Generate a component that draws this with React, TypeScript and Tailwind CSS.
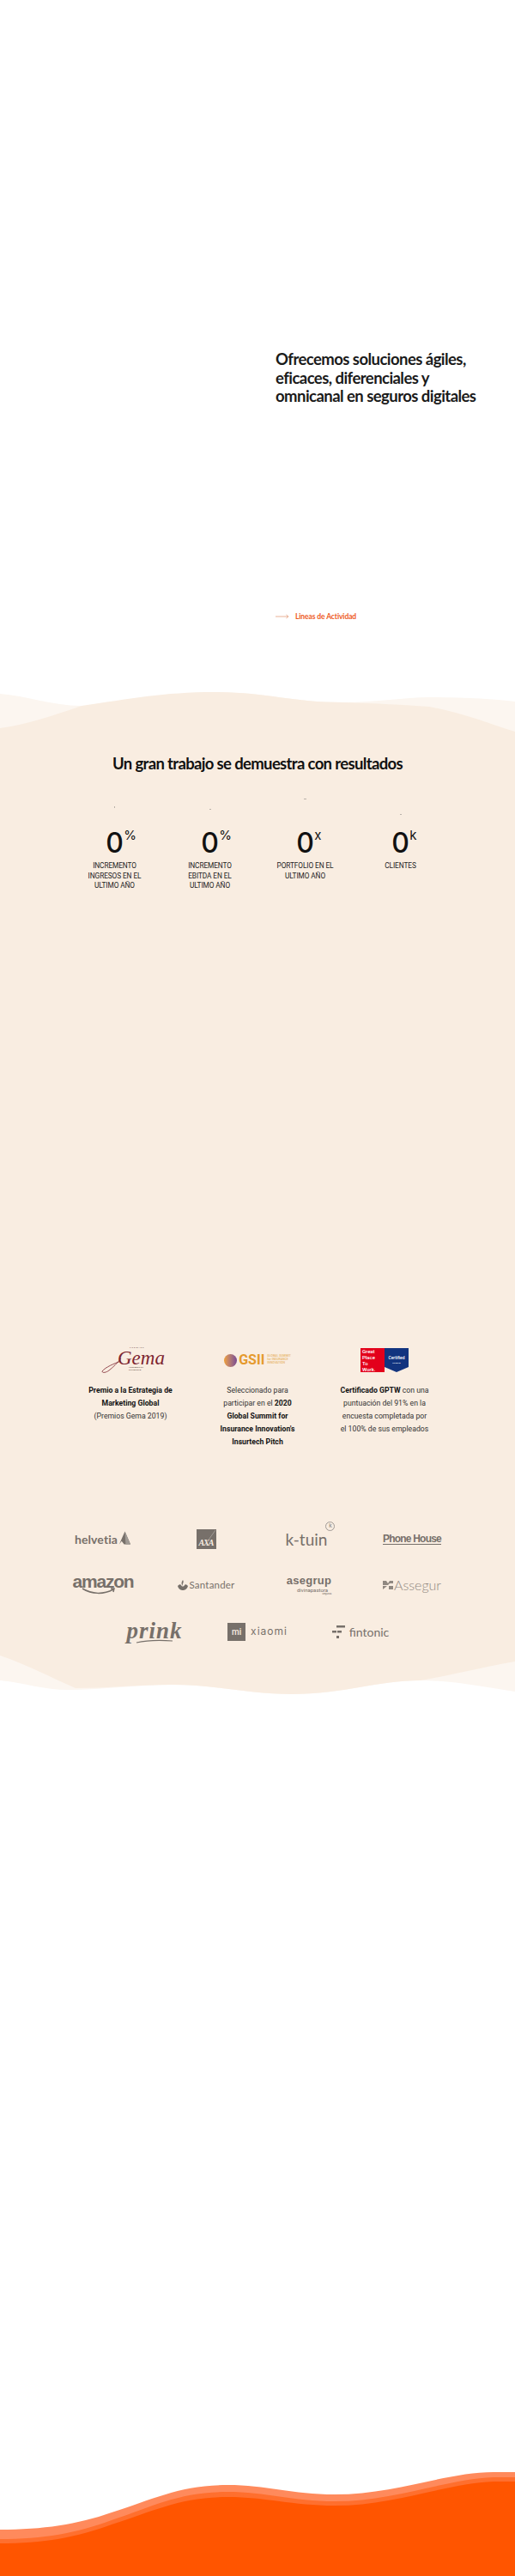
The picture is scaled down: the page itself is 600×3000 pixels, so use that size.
const stats = [
  { sup: "%", label: ["INCREMENTO", "INGRESOS EN EL", "ULTIMO AÑO"], mark: "mt-[21px] w-[1px] h-[2px]" },
  { sup: "%", label: ["INCREMENTO", "EBITDA EN EL", "ULTIMO AÑO"], mark: "mt-[24px] w-[2px] h-[1px]" },
  { sup: "x", label: ["PORTFOLIO EN EL", "ULTIMO AÑO"], mark: "mt-[12px] w-[3px] h-[1px]" },
  { sup: "k", label: ["CLIENTES"], mark: "mt-[30px] w-[2px] h-[1px]" },
]

function Stat({ sup, label, mark }: { sup: string; label: string[]; mark: string }) {
  return (
    <div className="w-[111px] flex flex-col items-center">
      <div className="h-[40px] flex justify-center">
        <div className={`${mark} bg-[#b9b2aa]`}></div>
      </div>
      <div className="mt-[6px] relative font-['Inter',sans-serif] font-medium text-[32px] leading-[36px] text-[#111]">
        0
        <span className="absolute left-[21px] top-[-1px] text-[15px] leading-[20px] font-normal">{sup}</span>
      </div>
      <div className="mt-[3px] text-[8.3px] leading-[11.7px] text-center text-[#222] tracking-[-0.1px]">
        {label.map((l) => (
          <div key={l}>{l}</div>
        ))}
      </div>
    </div>
  )
}

function GemaLogo() {
  return (
    <div className="relative w-[70px] h-[32px]">
      <div className="absolute top-[0px] left-[34px] text-[2.5px] tracking-[1px] text-[#6b4a4a]">PREMIOS</div>
      <svg viewBox="0 0 70 32" className="absolute inset-0 w-[70px] h-[32px]" fill="none" stroke="#7d2530" strokeWidth="0.8">
        <path d="M24 17C16 20 6 24 2 29c0 2 4 2 8-1 5-4 10-9 14-14" />
      </svg>
      <div className="absolute left-[20px] top-[1px] text-[23px] leading-[26px] italic text-[#7d2530] font-['Liberation_Serif',serif]">Gema</div>
      <div className="absolute left-[33px] top-[23px] text-[2.5px] leading-[3px] text-[#6b5a50]">LIDERAZGO EN<br />ESTRATEGIA</div>
    </div>
  )
}

function GsiiLogo() {
  return (
    <div className="flex items-center gap-[2px]">
      <div className="w-[15px] h-[15px] rounded-full bg-gradient-to-r from-[#f0a030] to-[#7a4a90]"></div>
      <div className="text-[16px] leading-[16px] font-bold text-[#e59a2e]">GSII</div>
      <div className="ml-[1px] text-[3.5px] leading-[3.8px] text-[#e8b56a] font-medium">
        GLOBAL SUMMIT<br />for INSURANCE<br />INNOVATION
      </div>
    </div>
  )
}

function GptwLogo() {
  return (
    <div className="flex">
      <div className="w-[28px] h-[28px] bg-[#e3001b] text-white text-[6px] leading-[6.8px] font-medium pl-[2px] pt-[1px]">
        Great<br />Place<br />To<br />Work.
      </div>
      <div className="relative w-[28px] h-[28px]">
        <svg viewBox="0 0 28 28" className="absolute inset-0 w-[28px] h-[28px]">
          <path d="M0 0H28V22L14 28 0 22Z" fill="#12347f" />
        </svg>
        <div className="relative text-center text-white text-[5px] font-medium leading-[6px] pt-[8px]">Certified</div>
        <div className="relative text-center text-white text-[2.5px] leading-[3px] pt-[2px]">ESPAÑA</div>
      </div>
    </div>
  )
}

function Helvetia() {
  return (
    <div className="flex items-center gap-[1px]">
      <span className="font-['Lato',sans-serif] font-bold text-[14px] tracking-[0.1px]">helvetia</span>
      <svg viewBox="0 0 16 16" className="w-[15px] h-[16px] -mt-[3px]">
        <path d="M8 0 15 16H7L4 12 1 16Z" fill="#77706a" />
        <path d="M8 0 15 16H9Z" fill="#a09a94" />
      </svg>
    </div>
  )
}

function Axa() {
  return (
    <div className="relative w-[23px] h-[23px] bg-[#77706a] text-[#f9ede1] flex items-end justify-center overflow-hidden">
      <svg viewBox="0 0 23 23" className="absolute inset-0 w-[23px] h-[23px]">
        <path d="M22 1 12 15" stroke="#a09a94" strokeWidth="1" />
      </svg>
      <span className="text-[10px] leading-[14px] font-bold italic font-['Liberation_Serif',serif] tracking-[-1px]">AXA</span>
    </div>
  )
}

function Ktuin() {
  return (
    <div className="relative pr-[6px] pt-[4px]">
      <span className="font-['Lato',sans-serif] text-[19px] leading-[22px]">k-tuin</span>
      <span className="absolute right-[-3px] top-[-6px] w-[11px] h-[11px] rounded-full border border-[#a09a94] text-[7px] leading-[9px] text-center text-[#8c857e]">k</span>
    </div>
  )
}

function PhoneHouse() {
  return (
    <div className="font-['Liberation_Sans',sans-serif] font-bold text-[12px] leading-[12px] tracking-[-0.8px] border-b-[1.5px] border-[#77706a]">Phone House</div>
  )
}

function Amazon() {
  return (
    <div className="relative h-[26px] -mt-[2px]">
      <span className="font-['Liberation_Sans',sans-serif] font-bold text-[21px] leading-[20px] tracking-[-1.2px]">amazon</span>
      <svg viewBox="0 0 70 10" className="absolute left-0 top-[16px] w-[70px] h-[10px]" fill="none" stroke="#77706a" strokeWidth="1.5">
        <path d="M11 2C22 9 36 9 47 3M44 2 48 2 47 6" />
      </svg>
    </div>
  )
}

function Santander() {
  return (
    <div className="flex items-center gap-[2px]">
      <svg viewBox="0 0 12 12" className="w-[12px] h-[12px]">
        <path d="M6 0C8 3 5 4 6 7 4 5 4 3 6 0ZM0 7C2 5 3 5 4 6 5 8 7 8 8 6 9 5 10 5 12 7 11 11 8 12 6 12 4 12 1 11 0 7Z" fill="#77706a" />
      </svg>
      <span className="font-['Lato',sans-serif] text-[11.5px] leading-[14px] tracking-[0.2px]">Santander</span>
    </div>
  )
}

function Asegrup() {
  return (
    <div className="flex flex-col items-center">
      <span className="font-['Liberation_Sans',sans-serif] font-bold text-[13px] leading-[12px] tracking-[0.3px]">asegrup</span>
      <span className="text-[6px] leading-[7px] mt-[1px] pl-[8px]">divinapastora</span>
      <span className="text-[3px] leading-[3px] self-end">seguros</span>
    </div>
  )
}

function Assegur() {
  return (
    <div className="flex items-center gap-[1px] opacity-80">
      <svg viewBox="0 0 12 12" className="w-[12px] h-[12px]">
        <path d="M0 1H4L6 4 8 1H12V4H8L6 6H0ZM0 7H5L0 11ZM7 7H12V11H7Z" fill="#77706a" />
      </svg>
      <span className="font-['Lato',sans-serif] font-light text-[16px] leading-[16px]">Assegur</span>
    </div>
  )
}

function Prink() {
  return (
    <div className="relative pb-[3px]">
      <span className="font-['Liberation_Serif',serif] italic font-bold text-[27px] leading-[22px] block tracking-[1px]">prink</span>
      <svg viewBox="0 0 68 6" className="absolute left-0 bottom-[-2px] w-[68px] h-[6px]" fill="none" stroke="#77706a" strokeWidth="1.2">
        <path d="M12 4C25 1 40 1 54 2" />
      </svg>
    </div>
  )
}

function Xiaomi() {
  return (
    <div className="flex items-center gap-[6px]">
      <div className="w-[21px] h-[21px] bg-[#77706a] text-[#f9ede1] text-[10px] leading-[21px] text-center font-medium">mi</div>
      <span className="font-['Inter',sans-serif] text-[12px] leading-[12px] tracking-[1px]">xiaomi</span>
    </div>
  )
}

function Fintonic() {
  return (
    <div className="flex items-center gap-[5px]">
      <svg viewBox="0 0 15 15" className="w-[15px] h-[15px]">
        <path d="M5 0h10v2.5H5ZM0 6h5v2.5H0ZM6 6h5v2.5H6ZM5 12h3v3H5Z" fill="#77706a" />
      </svg>
      <span className="font-['Lato',sans-serif] text-[14px] leading-[16px] mt-[2px]">fintonic</span>
    </div>
  )
}

const logoRows = [
  [<Helvetia key="h" />, <Axa key="a" />, <Ktuin key="k" />, <PhoneHouse key="p" />],
  [<Amazon key="am" />, <Santander key="s" />, <Asegrup key="as" />, <Assegur key="ag" />],
  [<Prink key="pr" />, <Xiaomi key="x" />, <Fintonic key="f" />],
]

export default function App() {
  return (
    <div className="w-[600px] h-[3000px] overflow-hidden bg-white font-['Roboto',sans-serif] flex flex-col">
      {/* intro */}
      <div className="h-[806px] pl-[321px] pt-[408px] flex flex-col">
        <h2 className="font-['Lato',sans-serif] font-bold text-[18.5px] leading-[21.5px] text-[#1a1a1a] tracking-[-0.55px]">
          Ofrecemos soluciones ágiles,<br />eficaces, diferenciales y<br />omnicanal en seguros digitales
        </h2>
        <div className="mt-[238px] flex items-center gap-[7px]">
          <svg viewBox="0 0 16 6" className="w-[16px] h-[6px]" fill="none" stroke="#e3a07f" strokeWidth="0.8">
            <path d="M0 3H15M12.5 1 15 3 12.5 5" />
          </svg>
          <span className="font-['Lato',sans-serif] font-bold text-[8.5px] leading-[14px] text-[#ee5a1e] tracking-[-0.1px]">Lineas de Actividad</span>
        </div>
      </div>

      {/* results */}
      <svg viewBox="0 0 600 46" className="block w-[600px] h-[46px] shrink-0">
        <path d="M0 2C30 4 60 16 95 16 150 16 190 0 250 0 310 0 340 12 400 12 440 12 470 6 500 6 540 6 575 8 600 11V46H0Z" fill="#fcf6f0" />
        <path d="M0 42C30 38 60 28 95 16 150 8 190 0 250 0 310 0 340 12 400 12 440 13 470 15 500 17 540 24 570 37 600 46H0Z" fill="#f9ede1" />
      </svg>
      <div className="h-[1076px] shrink-0 bg-[#f9ede1] flex flex-col">
        <h2 className="mt-[25px] text-center font-['Lato',sans-serif] font-bold text-[18.5px] leading-[24px] text-[#111] tracking-[-0.65px]">
          Un gran trabajo se demuestra con resultados
        </h2>
        <div className="mt-[17px] flex justify-center">
          {stats.map((s) => (
            <Stat key={s.label[0] + s.sup + s.label[1]} {...s} />
          ))}
        </div>

        <div className="mt-[530px] flex justify-center">
          <div className="w-[148px] flex flex-col items-center">
            <div className="h-[32px] flex items-center"><GemaLogo /></div>
          </div>
          <div className="w-[148px] flex flex-col items-center">
            <div className="h-[32px] flex items-center"><GsiiLogo /></div>
          </div>
          <div className="w-[148px] flex flex-col items-center">
            <div className="h-[32px] flex items-center"><GptwLogo /></div>
          </div>
        </div>
        <div className="mt-[12px] flex justify-center text-[8.7px] leading-[15px] text-center text-[#333]">
          <p className="w-[148px]">
            <b className="text-[#111]">Premio a la Estrategia de<br />Marketing Global</b><br />(Premios Gema 2019)
          </p>
          <p className="w-[148px]">
            Seleccionado para<br />participar en el <b className="text-[#111]">2020<br />Global Summit for<br />Insurance Innovation's<br />Insurtech Pitch</b>
          </p>
          <p className="w-[148px]">
            <b className="text-[#111]">Certificado GPTW</b> con una<br />puntuación del 91% en la<br />encuesta completada por<br />el 100% de sus empleados
          </p>
        </div>

        <div className="mt-[78px] flex flex-col text-[#77706a]">
          {logoRows.map((row, i) => (
            <div key={i} className="h-[54px] flex justify-center">
              {row.map((logo, j) => (
                <div key={j} className="w-[120px] flex items-center justify-center">{logo}</div>
              ))}
            </div>
          ))}
        </div>
      </div>
      <svg viewBox="0 0 600 45" className="block w-[600px] h-[45px] shrink-0">
        <path d="M0 0V29C30 32 50 40 80 40 120 40 160 34 200 34 250 34 290 45 340 45 400 45 440 29 490 29 530 29 570 38 600 42V0Z" fill="#fcf6f0" />
        <path d="M0 0C30 10 60 26 88 38 125 38 160 34 200 34 250 34 290 45 340 45 400 45 440 29 490 29 530 22 570 12 600 7V0Z" fill="#f9ede1" />
      </svg>

      {/* footer wave */}
      <div className="flex-1"></div>
      <svg viewBox="0 0 600 122" className="block w-[600px] h-[122px] shrink-0">
        <path d="M0 68C50 68 90 62 130 48 180 32 210 16 265 16 310 16 340 27 390 27 460 27 520 1 575 1H600V122H0Z" fill="#ff8a5c" />
        <path d="M0 79C50 79 90 72 130 57 180 40 210 24 265 24 310 24 340 35 390 35 460 35 520 9 575 7H600V122H0Z" fill="#ff6f2e" />
        <path d="M0 84C50 84 90 77 130 62 180 46 210 30 265 30 310 30 340 40 390 40 460 40 520 14 575 12H600V122H0Z" fill="#ff5500" />
      </svg>
    </div>
  )
}
